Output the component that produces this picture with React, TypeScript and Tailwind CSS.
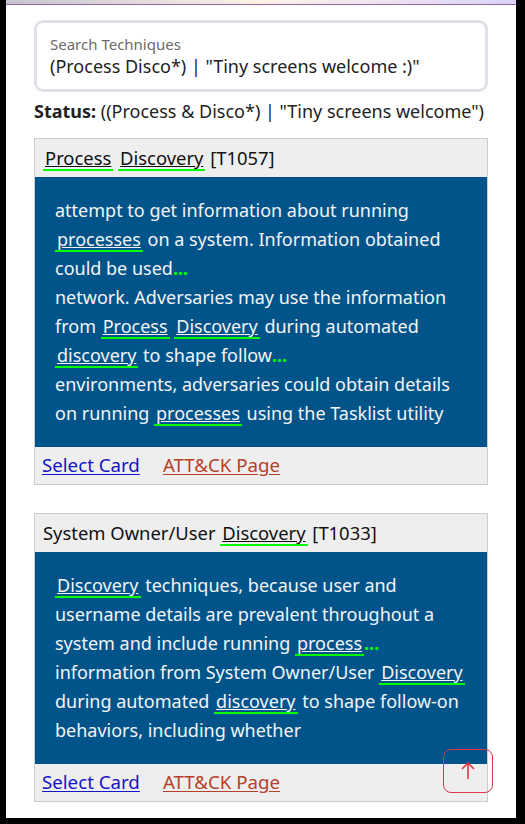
import React from 'react';

const font = { fontFamily: '"Noto Sans", "Open Sans", sans-serif' };

// highlighted search match
const Hit = ({ children }: { children: React.ReactNode }) => (
  <span className="inline-block leading-[22px] underline border-b-2 border-[#00ff00] px-[2px]">{children}</span>
);

const More = () => <span className="text-[#00ff00] font-bold">...</span>;

interface CardProps {
  title: React.ReactNode;
  body: React.ReactNode;
}

const Card: React.FC<CardProps> = ({ title, body }) => (
  <div className="border border-[#cccccc]">
    <div className="bg-[#eeeeee] h-[38px] flex items-center px-[8px] text-[18.4px] text-[#111]">{title}</div>
    <div className="bg-[#01548a] text-[#f2f4f7] text-[18px] leading-[29px] pl-[20px] pr-[16px] py-[19px]">{body}</div>
    <div className="bg-[#eeeeee] h-[37px] flex items-center gap-[23px] px-[7px] text-[18.7px]">
      <a href="#" className="text-[#1414c8] underline underline-offset-2">Select Card</a>
      <a href="#" className="text-[#b5412a] underline underline-offset-2">ATT&amp;CK Page</a>
    </div>
  </div>
);

export default function App() {
  return (
    <div className="w-[525px] h-[824px] bg-black pl-[6px] pr-[9px] pb-[6px]" style={font}>
      <div className="relative h-full bg-white overflow-hidden">
        <div className="h-[5px] bg-gradient-to-r from-[#c6c2cf] via-[#fff1e6] to-[#dcd2f8] border-b border-[#8a6a9a]" />
        <div className="px-[28px] pt-[15px]">
          <div className="border-[3px] border-[#dee1e5] rounded-[9px] px-[13px] pt-[12px] pb-[10px]">
            <div className="text-[15px] text-[#6b6b6b] leading-[18px]">Search Techniques</div>
            <div className="text-[18px] text-[#222] leading-[26px]">(Process Disco*) | "Tiny screens welcome :)"</div>
          </div>
          <div className="mt-[6px] text-[18px] text-[#222] leading-[26px]">
            <span className="font-bold">Status:</span> ((Process &amp; Disco*) | "Tiny screens welcome")
          </div>
          <div className="mt-[14px] flex flex-col gap-[28px]">
            <Card
              title={<span><Hit>Process</Hit> <Hit>Discovery</Hit> [T1057]</span>}
              body={
                <p>
                  attempt to get information about running <Hit>processes</Hit> on a system. Information obtained could be used<More />
                  <br />
                  network. Adversaries may use the information from <Hit>Process</Hit> <Hit>Discovery</Hit> during automated <Hit>discovery</Hit> to shape follow<More />
                  <br />
                  environments, adversaries could obtain details on running <Hit>processes</Hit> using the Tasklist utility
                </p>
              }
            />
            <Card
              title={<span>System Owner/User <Hit>Discovery</Hit> [T1033]</span>}
              body={
                <p>
                  <Hit>Discovery</Hit> techniques, because user and username details are prevalent throughout a system and include running <Hit>process</Hit><More />
                  <br />
                  information from System Owner/User <Hit>Discovery</Hit> during automated <Hit>discovery</Hit> to shape follow-on behaviors, including whether
                </p>
              }
            />
          </div>
        </div>
        <button className="absolute left-[437px] top-[749px] w-[50px] h-[44px] border border-[#dc3545] rounded-[8px] flex items-center justify-center text-[#dc3545]">
          <svg width="16" height="20" viewBox="0 0 16 20" fill="none" stroke="currentColor" strokeWidth="1.6">
            <path d="M8 18V2M2 8l6-6 6 6" />
          </svg>
        </button>
      </div>
    </div>
  );
}
